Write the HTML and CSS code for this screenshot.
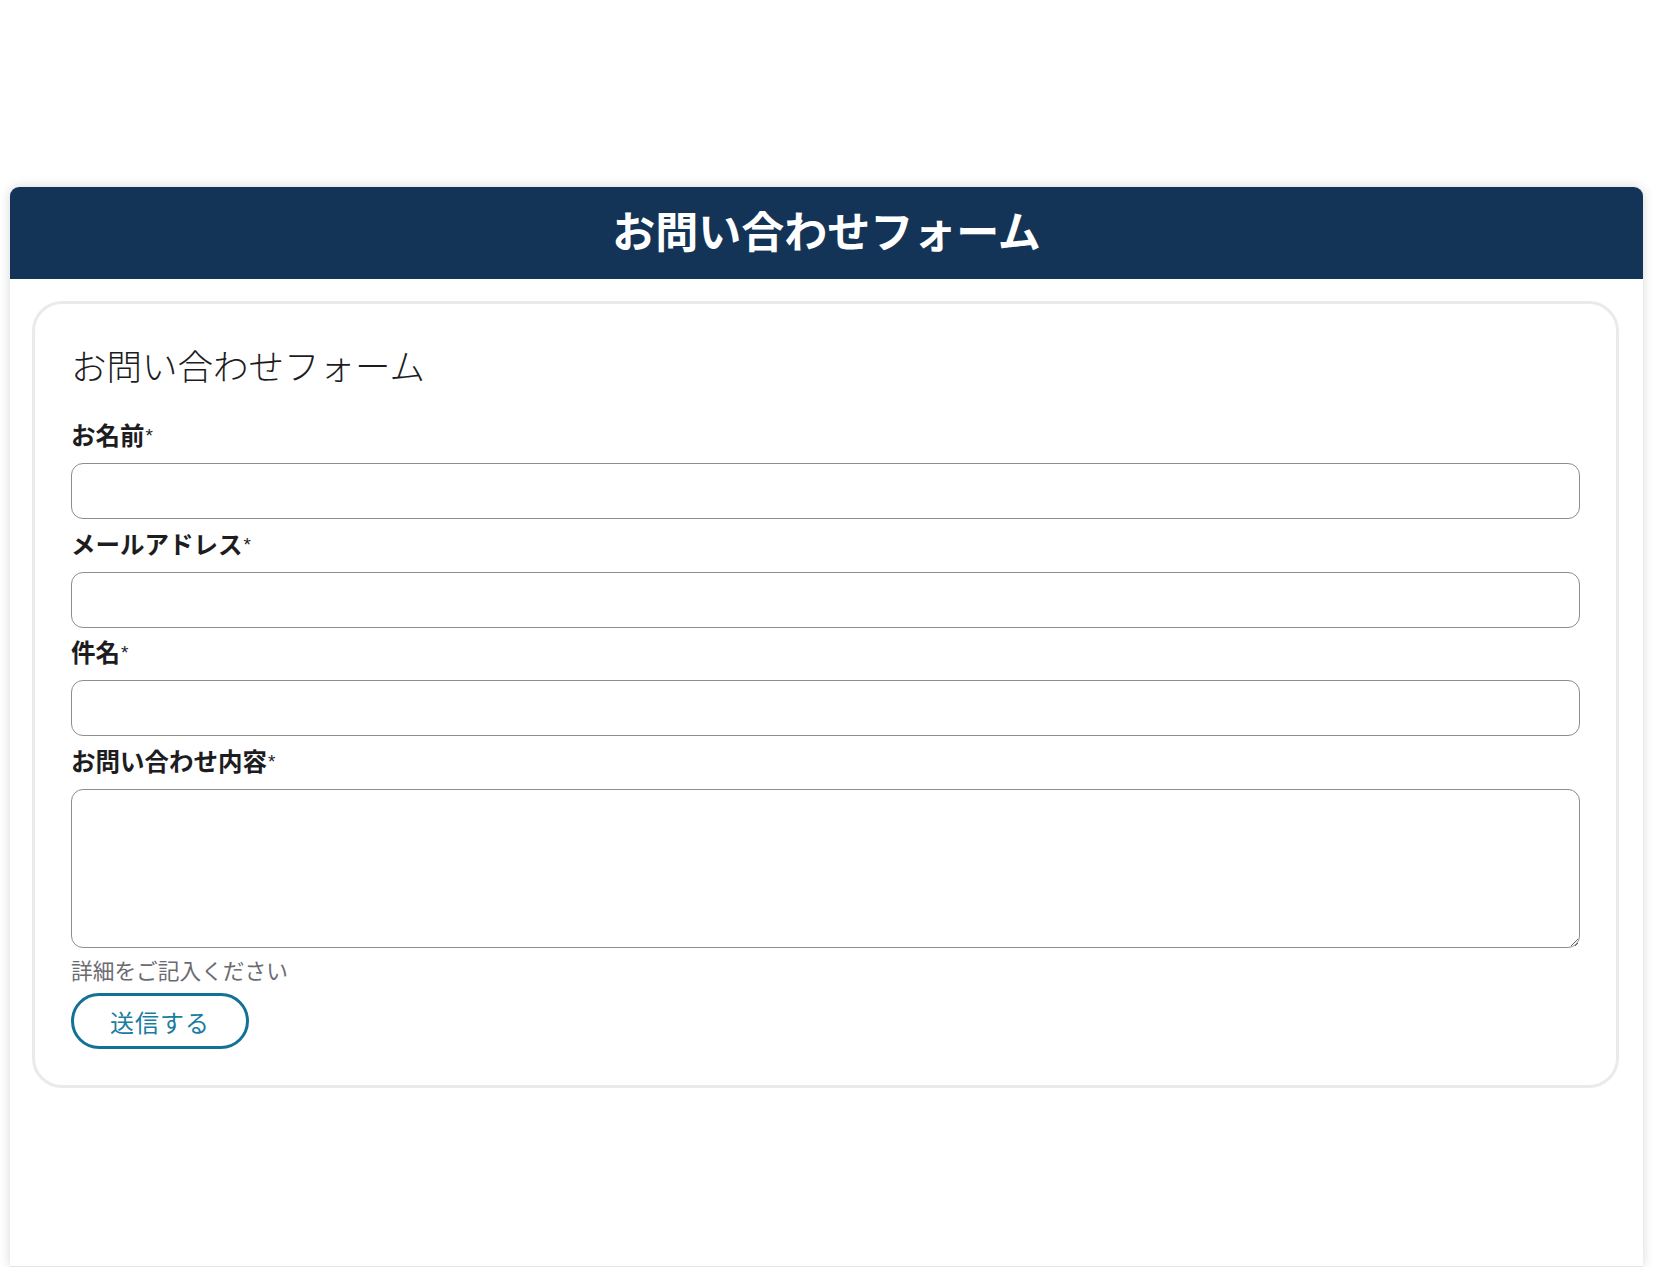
FILE: index.html
```html
<!DOCTYPE html>
<html lang="ja">
<head>
    <meta charset="UTF-8">
    <meta name="viewport" content="width=device-width, initial-scale=1.0">
    <title>お問い合わせフォーム</title>
    <link rel="stylesheet" href="styles.css">
</head>
<body>
    <div class="page">
        <div class="panel">
            <header class="panel-header">
                <h1>お問い合わせフォーム</h1>
            </header>

            <div class="panel-body">
                <form class="form-card" onsubmit="return false;">
                    <h2 class="form-title">お問い合わせフォーム</h2>

                    <div class="field">
                        <label for="name">お名前<span class="req">*</span></label>
                        <input type="text" id="name" class="text-input">
                    </div>

                    <div class="field">
                        <label for="email">メールアドレス<span class="req">*</span></label>
                        <input type="email" id="email" class="text-input">
                    </div>

                    <div class="field">
                        <label for="subject">件名<span class="req">*</span></label>
                        <input type="text" id="subject" class="text-input">
                    </div>

                    <div class="field">
                        <label for="message">お問い合わせ内容<span class="req">*</span></label>
                        <textarea id="message" class="text-area"></textarea>
                        <p class="hint">詳細をご記入ください</p>
                    </div>

                    <button type="submit" class="submit-btn">送信する</button>
                </form>
            </div>
        </div>
    </div>
</body>
</html>
```

FILE: styles.css
```css
* {
    margin: 0;
    padding: 0;
    box-sizing: border-box;
}

body {
    font-family: "Noto Sans CJK JP", "Noto Sans", sans-serif;
    background: #fff;
    color: #1d1d1f;
    overflow: hidden;
}

.page {
    padding: 187px 0 0 10px;
}

.panel {
    width: 1633px;
    height: 1080px;
    background: #fff;
    border-radius: 9px 9px 0 0;
    box-shadow: 0 0 12px rgba(0, 0, 0, 0.16);
    border-bottom: 1px solid #e4e4e4;
}

.panel-header {
    height: 92px;
    padding-bottom: 8px;
    background: #143457;
    border-radius: 9px 9px 0 0;
    display: flex;
    align-items: center;
    justify-content: center;
}

.panel-header h1 {
    color: #fff;
    font-size: 43px;
    font-weight: 700;
    line-height: 1;
}

.panel-body {
    padding: 22px 24px 0 22px;
}

.form-card {
    border: 3px solid #e9ebeb;
    border-radius: 30px;
    padding: 39px 36px 36px 36px;
    display: flex;
    flex-direction: column;
    align-items: flex-start;
}

.form-title {
    font-size: 35.5px;
    font-weight: 300;
    line-height: 43px;
    color: #1d1d1f;
    margin-bottom: 31px;
}

.field {
    width: 100%;
    margin-bottom: 6.6px;
}

.field label {
    display: block;
    font-size: 24.5px;
    font-weight: 700;
    line-height: 36px;
    margin-bottom: 9px;
    color: #1d1d1f;
}

.req {
    font-family: "Liberation Sans", sans-serif;
    font-size: 19px;
    font-weight: 400;
    vertical-align: 3px;
    margin-left: 1px;
}

.text-input,
.text-area {
    display: block;
    width: 100%;
    border: 1px solid #8c8c91;
    border-radius: 12px;
    background: #fff;
    font-family: inherit;
    font-size: 22px;
    outline: none;
}

.text-input {
    height: 56px;
    padding: 0 14px;
}

.text-area {
    height: 159px;
    padding: 10px 14px;
    resize: vertical;
}

.hint {
    font-size: 21.7px;
    line-height: 32px;
    color: #6b6b72;
    margin-top: 6px;
}

.submit-btn {
    width: 178px;
    height: 56px;
    margin-top: 1px;
    border: 3px solid #137196;
    border-radius: 28px;
    background: #fff;
    color: #1b7ca2;
    font-family: inherit;
    font-size: 24px;
    font-weight: 400;
    letter-spacing: 1px;
    cursor: pointer;
}
```
